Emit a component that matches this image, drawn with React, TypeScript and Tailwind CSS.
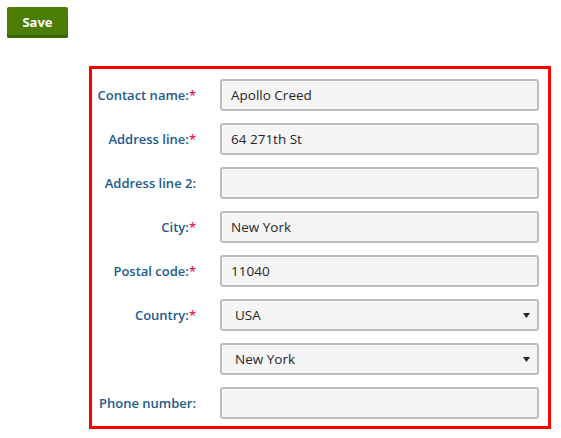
import React from 'react';

const rows = [
  { label: 'Contact name:', required: true, value: 'Apollo Creed', type: 'text' },
  { label: 'Address line:', required: true, value: '64 271th St', type: 'text' },
  { label: 'Address line 2:', required: false, value: '', type: 'text' },
  { label: 'City:', required: true, value: 'New York', type: 'text' },
  { label: 'Postal code:', required: true, value: '11040', type: 'text' },
  { label: 'Country:', required: true, value: 'USA', type: 'select' },
  { label: '', required: false, value: 'New York', type: 'select' },
  { label: 'Phone number:', required: false, value: '', type: 'text' },
];

function Field({ value, type }: { value: string; type: string }) {
  if (type === 'select') {
    return (
      <div className="flex h-[32px] w-[319px] items-center justify-between rounded-[3px] border-2 border-[#bdbdbd] bg-[#f5f5f5] pl-[13px] pr-[7px] pt-[1px] text-[13.5px] text-[#262626]">
        <span>{value}</span>
        <svg width="7" height="5" viewBox="0 0 7 5">
          <path d="M0 0h7L3.5 5z" fill="#262626" />
        </svg>
      </div>
    );
  }
  return (
    <div className="flex h-[32px] w-[319px] items-center rounded-[3px] border-2 border-[#bdbdbd] bg-[#f5f5f5] pl-[9px] pt-[1px] text-[13.5px] text-[#262626]">
      {value}
    </div>
  );
}

export default function App() {
  return (
    <div className="min-h-screen bg-white font-['Open_Sans',sans-serif]">
      <div className="px-[7px] pt-[7px]">
        <button className="h-[31px] w-[61px] rounded-[2px] bg-[#4c7d04] text-[13px] font-bold text-white shadow-[inset_0_-3px_0_#3a6200]">
          Save
        </button>
      </div>

      <div className="ml-[89px] mt-[28px] w-[462px] border-[3px] border-[#ff0000] pb-[7px] pt-[10px] pr-[9px]">
        <div className="flex flex-col gap-[12px]">
          {rows.map((row, i) => (
            <div key={i} className="flex items-center">
              <div className="w-[104px] pt-[2px] text-right text-[13px] font-semibold text-[#225a8c]">
                {row.label}
                {row.required && <span className="text-[#e5195f]">*</span>}
              </div>
              <div className="ml-[24px]">
                <Field value={row.value} type={row.type} />
              </div>
            </div>
          ))}
        </div>
      </div>
    </div>
  );
}
